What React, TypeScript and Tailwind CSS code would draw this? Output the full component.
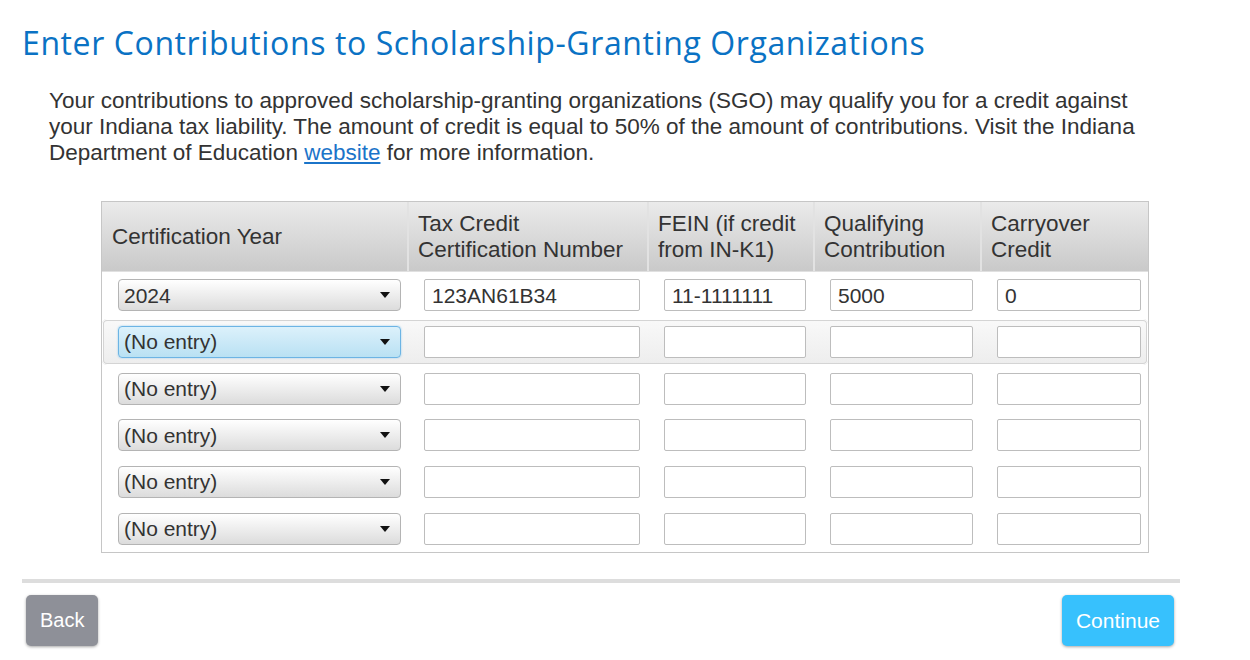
import React from "react";

const rows = [
  { year: "2024", cert: "123AN61B34", fein: "11-1111111", qual: "5000", carry: "0" },
  { year: "(No entry)", cert: "", fein: "", qual: "", carry: "", focused: true },
  { year: "(No entry)", cert: "", fein: "", qual: "", carry: "" },
  { year: "(No entry)", cert: "", fein: "", qual: "", carry: "" },
  { year: "(No entry)", cert: "", fein: "", qual: "", carry: "" },
  { year: "(No entry)", cert: "", fein: "", qual: "", carry: "" },
];

function Select({ value, focused }: { value: string; focused?: boolean }) {
  return (
    <div
      className={
        "ml-[16px] mr-[8px] h-[32px] rounded-[4px] border flex items-center justify-between pl-[5px] pr-[10px] text-[21px] text-[#333] " +
        (focused
          ? "border-[#6cb4e4] bg-gradient-to-b from-[#dcf1fb] to-[#b9e1f3] shadow-[0_0_2px_#8ccbf0]"
          : "border-[#b4b4b4] bg-gradient-to-b from-[#ffffff] to-[#dcdcdc]")
      }
    >
      <span>{value}</span>
      <svg width="10" height="6" viewBox="0 0 10 6">
        <polygon points="0,0 10,0 5,6" fill="#111" />
      </svg>
    </div>
  );
}

function Input({ value }: { value: string }) {
  return (
    <div className="ml-[15px] mr-[9px] h-[32px] rounded-[2px] border border-[#bdbdbd] bg-white flex items-center pl-[7px] text-[21px] text-[#333]">
      {value}
    </div>
  );
}

export default function App() {
  const cols = "grid grid-cols-[307px_240px_166px_167px_168px]";
  return (
    <div className="w-[1250px] h-[660px] bg-white [font-family:'Liberation_Sans',Arial,sans-serif] text-[#333] overflow-hidden">
      <h1 className="pl-[22px] pt-[23px] text-[32px] leading-[40px] text-[#0a72c4] [font-family:'Open_Sans',sans-serif] tracking-[0.6px]">
        Enter Contributions to Scholarship-Granting Organizations
      </h1>
      <p className="pl-[49px] pr-[90px] mt-[25px] text-[22.5px] leading-[26px] text-[#333]">
        Your contributions to approved scholarship-granting organizations (SGO) may qualify you for a credit against
        your Indiana tax liability. The amount of credit is equal to 50% of the amount of contributions. Visit the Indiana
        Department of Education <span className="text-[#1b74c9] underline">website</span> for more information.
      </p>
      <div className="ml-[101px] mt-[35px] w-[1048px] border border-[#c6c6c6]">
        <div className={cols + " h-[70px] bg-gradient-to-b from-[#ebebeb] to-[#c9c9c9] text-[22.5px] leading-[26px] text-[#333] border-b border-[#e0e0e0]"}>
          <div className="flex items-center pl-[10px] border-r-2 border-[#e2e2e2]">Certification Year</div>
          <div className="flex items-center pl-[9px] border-r-2 border-[#e2e2e2]">
            Tax Credit
            <br />
            Certification Number
          </div>
          <div className="flex items-center pl-[9px] border-r-2 border-[#e2e2e2]">
            FEIN (if credit
            <br />
            from IN-K1)
          </div>
          <div className="flex items-center pl-[9px] border-r-2 border-[#e2e2e2]">
            Qualifying
            <br />
            Contribution
          </div>
          <div className="flex items-center pl-[9px]">
            Carryover
            <br />
            Credit
          </div>
        </div>
        {rows.map((r, i) => (
          <div
            key={i}
            className={
              cols +
              " h-[46.67px] items-center " +
              (r.focused
                ? "rounded-[5px] bg-gradient-to-b from-[#f9f9f9] to-[#ededed] shadow-[inset_0_0_0_1px_#ffffff,inset_0_0_0_2px_#d4d4d4]"
                : "")
            }
          >
            <Select value={r.year} focused={r.focused} />
            <Input value={r.cert} />
            <Input value={r.fein} />
            <Input value={r.qual} />
            <Input value={r.carry} />
          </div>
        ))}
      </div>
      <div className="ml-[22px] mt-[26px] w-[1158px] h-[4px] bg-[#dddddd]" />
      <div className="flex justify-between ml-[26px] w-[1148px] mt-[12px]">
        <button className="h-[51px] px-[14px] rounded-[5px] bg-[#8e9098] text-white text-[20px] shadow-[0_1px_3px_rgba(0,0,0,0.35)]">
          Back
        </button>
        <button className="h-[51px] px-[14px] rounded-[5px] bg-[#37c1fd] text-white text-[21px] shadow-[0_1px_3px_rgba(0,0,0,0.35)]">
          Continue
        </button>
      </div>
    </div>
  );
}
